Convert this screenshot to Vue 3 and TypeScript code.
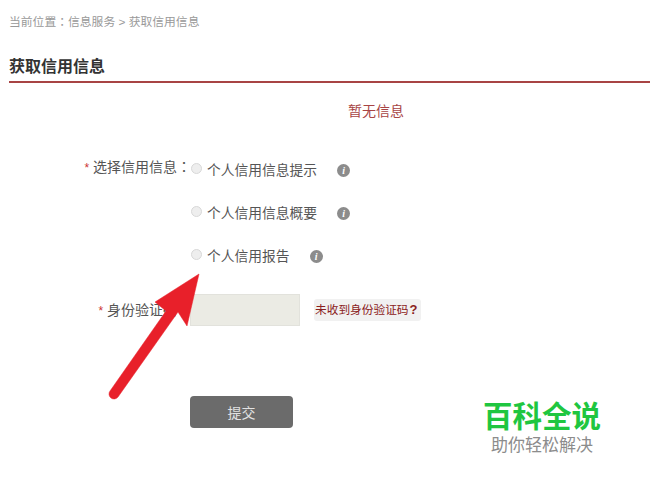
<template>
  <div class="page">
    <div class="crumbs">当前位置<span class="colon">：</span>信息服务 &gt; 获取信用信息</div>
    <h2 class="title">获取信用信息</h2>
    <p class="notice">暂无信息</p>

    <form class="form" @submit.prevent>
      <div class="field">
        <label class="label"><span class="star">*</span> 选择信用信息<span class="colon">：</span></label>
        <div class="options">
          <div v-for="item in options" :key="item" class="option">
            <span class="radio"></span>
            <span class="option-text">{{ item }}</span>
            <span class="info">i</span>
          </div>
        </div>
      </div>

      <div class="field code-field">
        <label class="label"><span class="star">*</span> 身份验证码<span class="colon">：</span></label>
        <div class="code-input"></div>
        <span class="code-link">未收到身份验证码<b class="mark">?</b></span>
      </div>

      <button class="submit" type="submit">提交</button>
    </form>

    <!-- annotation arrow drawn over the form -->
    <svg class="arrow" width="650" height="488" viewBox="0 0 650 488" aria-hidden="true">
      <path
        d="M199 274 L187 326 L178 312 L118 397 A5 5 0 0 1 110 391 L166 311 L155 302 Z"
        fill="#e8202a"
        stroke="#e8202a"
        stroke-width="0.5"
        stroke-linejoin="round"
      />
    </svg>

    <div class="brand">
      <div class="brand-name">百科全说</div>
      <div class="brand-sub">助你轻松解决</div>
    </div>
  </div>
</template>

<script setup lang="ts">
const options: string[] = ['个人信用信息提示', '个人信用信息概要', '个人信用报告'];
</script>

<style scoped>
.page {
  position: relative;
  width: 650px;
  height: 488px;
  overflow: hidden;
  background: #fff;
  font-family: "Liberation Sans", "Noto Sans CJK SC", sans-serif;
  color: #555;
}

.colon {
  font-family: "Noto Sans CJK TC", sans-serif;
  line-height: 1;
}

.crumbs {
  padding: 14px 0 0 9px;
  height: 18px;
  line-height: 17px;
  font-size: 11.8px;
  color: #999;
}

.title {
  margin: 23px 0 0 9px;
  height: 26px;
  line-height: 24px;
  font-size: 16px;
  font-weight: 700;
  color: #333;
  border-bottom: 2px solid #a84444;
}

.notice {
  margin: 18px 0 0 348px;
  line-height: 20px;
  font-size: 14px;
  color: #a84444;
}

.form {
  margin-top: 37px;
}

.field {
  display: flex;
}

.label {
  width: 188px;
  margin-right: -4px;
  padding-left: 3px;
  flex: none;
  text-align: right;
  font-size: 14px;
  line-height: 18px;
  white-space: nowrap;
}

.star {
  color: #c33;
  font-size: 12px;
}

.options {
  display: flex;
  flex-direction: column;
  gap: 22px;
}

.option {
  display: flex;
  align-items: center;
  height: 20px;
  padding-top: 1px;
  font-size: 13.75px;
  color: #555;
}

.radio {
  width: 11px;
  height: 11px;
  margin: -2px 5px 0 4px;
  box-sizing: border-box;
  border-radius: 50%;
  border: 1px solid #d8d8d8;
  background: #eee;
}

.option-text {
  margin-right: 20px;
}

.info {
  width: 13px;
  height: 13px;
  margin-top: 2px;
  border-radius: 50%;
  background: #8c8c8c;
  color: #fff;
  font: italic 700 10px/13px "Liberation Serif", serif;
  text-align: center;
}

.code-field {
  align-items: center;
  margin-top: 29px;
}

.code-input {
  position: relative;
  width: 110px;
  height: 32px;
  margin-left: 3px;
  box-sizing: border-box;
  border: 1px solid #e2e2dc;
  background: #ebebe4;
}

.code-link {
  margin-left: 14px;
  height: 22px;
  padding: 0 4px 0 1px;
  line-height: 22px;
  border-radius: 3px;
  background: #f1f1f1;
  font-size: 11.7px;
  color: #8a2020;
  white-space: nowrap;
}

.mark {
  margin-left: 1px;
  font-size: 13px;
}

.submit {
  display: block;
  width: 103px;
  height: 32px;
  margin: 70px 0 0 190px;
  padding: 0;
  border: none;
  border-radius: 4px;
  background: #6b6b6b;
  color: #e2e2e2;
  font-family: inherit;
  font-size: 14px;
}

.arrow {
  position: absolute;
  left: 0;
  top: 0;
}

.brand {
  position: absolute;
  left: 483px;
  top: 399px;
  width: 118px;
  text-align: center;
}

.brand-name {
  font-size: 29.5px;
  line-height: 36px;
  font-weight: 700;
  color: #1fc640;
  white-space: nowrap;
}

.brand-sub {
  font-size: 17px;
  line-height: 22px;
  color: #8c8c8c;
  white-space: nowrap;
}
</style>
